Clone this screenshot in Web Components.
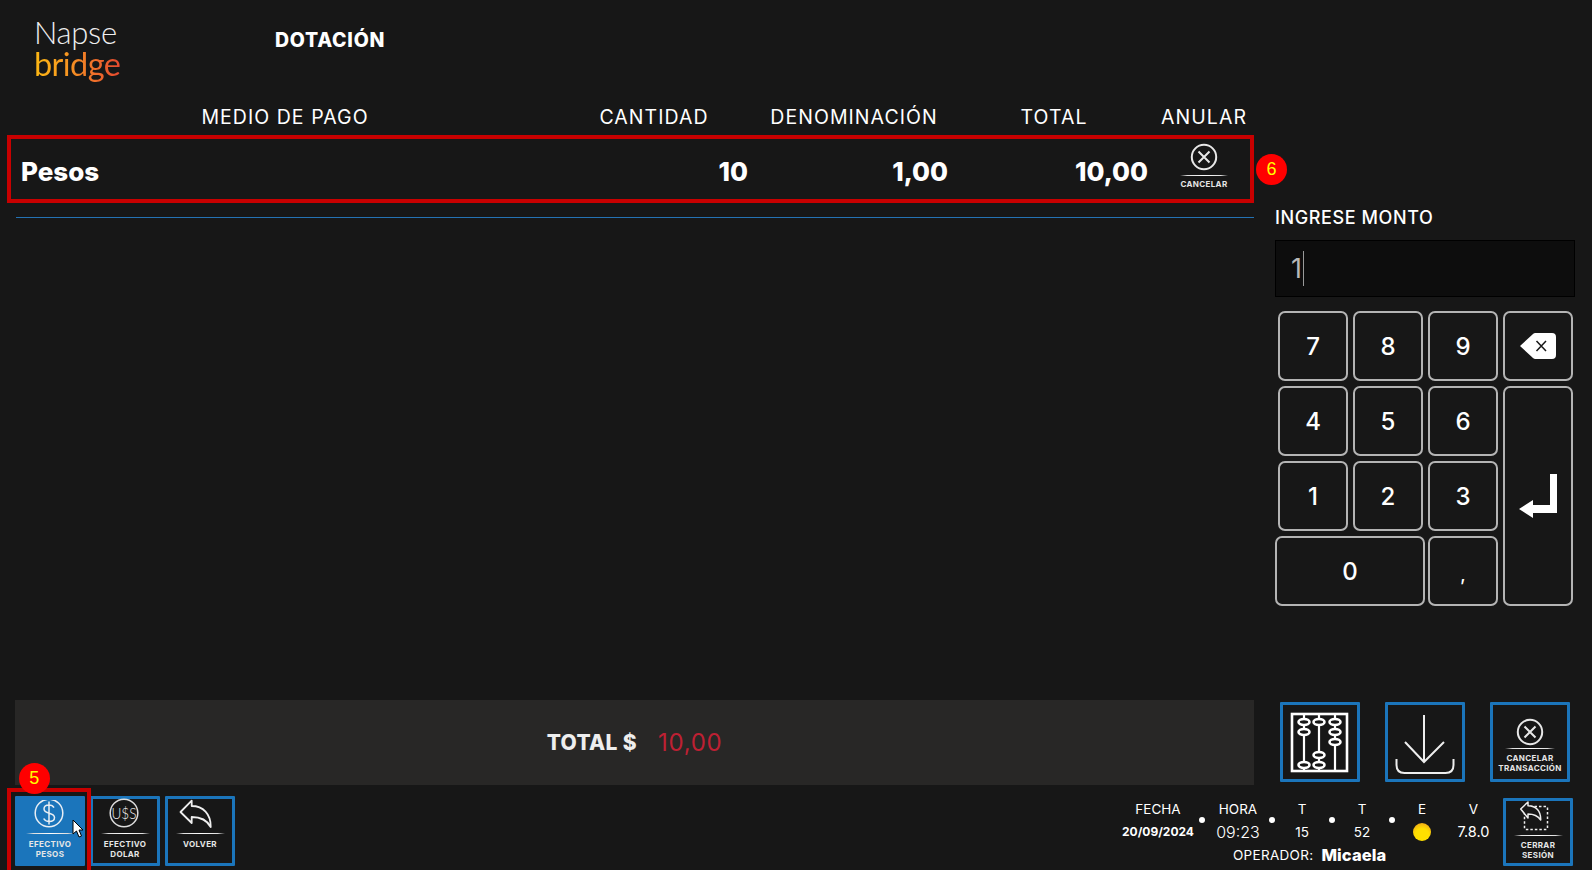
<!DOCTYPE html>
<html lang="es"><head><meta charset="utf-8"><title>Dotación</title>
<style>
html,body{margin:0;height:100%;background:#171717;overflow:hidden}
body{font-family:Inter,"Liberation Sans",sans-serif;color:#fff}
</style></head><body>
<pos-app>
  <pos-header slot="header">DOTACIÓN</pos-header>
  <pay-table slot="left">
    <pay-row>
      <span slot="name">Pesos</span><span slot="qty">10</span><span slot="den">1,00</span><span slot="tot">10,00</span>
      <action-btn slot="act" variant="plain" style="--icon-h:37px;--w:64px;--h:68px;--line:48px">
        <svg slot="icon" width="28" height="28" viewBox="0 0 28 28" fill="none" stroke="#e8e8e8" stroke-width="2" style="margin-top:5px"><circle cx="14" cy="14" r="12.2"/><path d="M8.5 8.5l11 11M19.5 8.5l-11 11"/></svg>
        CANCELAR
      </action-btn>
      <annot-badge slot="badge" style="--bx:1271.5px;--by:169px">6</annot-badge>
    </pay-row>
  </pay-table>
  <total-bar slot="left"><span slot="label">TOTAL $</span><span slot="value">10,00</span></total-bar>
  <side-panel slot="right">
    <amount-input>1</amount-input>
    <num-pad></num-pad>
    <side-actions>
      <action-btn variant="tall" style="--icon-h:74px">
        <svg slot="icon" width="60" height="62" viewBox="0 0 60 62" fill="none" stroke="#fff" stroke-width="2.6" style="margin-top:7px"><rect x="2" y="2" width="55" height="57"/><path d="M14 2v57M29 2v57M45 2v57" stroke-width="2.2"/><g fill="#171717"><ellipse cx="14" cy="10" rx="5.5" ry="3"/><ellipse cx="14" cy="20" rx="5.5" ry="3"/><ellipse cx="14" cy="53" rx="5.5" ry="3"/><ellipse cx="29" cy="10" rx="5.5" ry="3"/><ellipse cx="29" cy="43" rx="5.5" ry="3"/><ellipse cx="29" cy="53" rx="5.5" ry="3"/><ellipse cx="45" cy="10" rx="5.5" ry="3"/><ellipse cx="45" cy="20" rx="5.5" ry="3"/><ellipse cx="45" cy="30" rx="5.5" ry="3"/></g></svg>
      </action-btn>
      <action-btn variant="tall" style="--icon-h:74px">
        <svg slot="icon" width="60" height="62" viewBox="0 0 60 62" fill="none" stroke="#eee" stroke-width="2" style="margin-top:7px"><path d="M29 3v47M10 30l19 20 20-20"/><path d="M1.5 47v6q0 8 8 8h41q8 0 8-8v-6" stroke-width="2"/></svg>
      </action-btn>
      <action-btn variant="tall" style="--icon-h:43px;--line:50px;--pt:5px">
        <svg slot="icon" width="28" height="28" viewBox="0 0 28 28" fill="none" stroke="#e8e8e8" stroke-width="2" style="margin-top:13px"><circle cx="14" cy="14" r="12.2"/><path d="M8.5 8.5l11 11M19.5 8.5l-11 11"/></svg>
        CANCELAR<br>TRANSACCIÓN
      </action-btn>
    </side-actions>
  </side-panel>
  <pos-footer slot="footer">
    <action-btn slot="btns" active style="--icon-h:34px;--h:70px;--pt:6px">
      <svg slot="icon" width="34" height="34" viewBox="0 0 34 34" fill="none" stroke="#e8eef4" stroke-width="1.5" style="margin:1px 0 0 -3px"><circle cx="17" cy="13" r="13.8"/><path d="M22 7.6c-1-1.8-2.8-2.6-5-2.6-3 0-5 1.5-5 4 0 5.5 10.5 3 10.5 8.5 0 2.500-2.300 4-5.300 4-2.500 0-4.500-1-5.500-3M17 1.500v23"/></svg>
      EFECTIVO<br>PESOS
      <annot-badge slot="badge" style="--bx:34.3px;--by:778px">5</annot-badge>
      <annot-box slot="over"></annot-box>
      <svg slot="over" width="12" height="19" viewBox="0 0 12 19" style="position:absolute;left:54px;top:20px;z-index:3"><path d="M1 1v14l3.500-3 2.500 6 2.500-1-2.500-6H11z" fill="#fff" stroke="#000" stroke-width="1"/></svg>
    </action-btn>
    <action-btn slot="btns" style="--icon-h:34px;--h:70px;--pt:6px">
      <svg slot="icon" width="34" height="34" viewBox="0 0 34 34" fill="none" stroke="#ddd" stroke-width="1.5" overflow="visible" style="margin:1px 0 0 -3px"><circle cx="17" cy="13" r="13.8"/><text x="17" y="19" text-anchor="middle" font-family="Lato,sans-serif" font-weight="300" font-size="16" textLength="25" lengthAdjust="spacingAndGlyphs" fill="#eee" stroke="none">U$S</text></svg>
      EFECTIVO<br>DOLAR
    </action-btn>
    <action-btn slot="btns" style="--icon-h:34px;--h:70px;--pt:6px">
      <svg slot="icon" width="40" height="33" viewBox="4 2 40 33" fill="none" stroke="#eee" stroke-width="1.8" overflow="visible"><path d="M4.500 15 15.700 3.700V9C27 9 35 17 34.700 30 31 23 25 20 15.700 20v6z" stroke-linejoin="round"/></svg>
      VOLVER
    </action-btn>
    <status-bar slot="status">
      <status-cell slot="fecha"><span slot="k">FECHA</span><b slot="v" style="font-size:12px">20/09/2024</b></status-cell>
      <status-cell slot="hora"><span slot="k">HORA</span><span slot="v" style="font-size:16px;font-weight:300">09:23</span></status-cell>
      <status-cell slot="t1"><span slot="k">T</span><span slot="v">15</span></status-cell>
      <status-cell slot="t2"><span slot="k">T</span><span slot="v">52</span></status-cell>
      <status-cell slot="e"><span slot="k">E</span><span slot="v" style="display:block;width:18px;height:18px;border-radius:50%;background:radial-gradient(circle at 50% 70%,#ffdf00 0 45%,#f0a818 85%,#b98a2a 100%)"></span></status-cell>
      <status-cell slot="ver"><span slot="k">V</span><span slot="v" style="font-size:14.5px">7.8.0</span></status-cell>
      <span slot="oplabel">OPERADOR:</span><b slot="opname">Micaela</b>
    </status-bar>
    <action-btn slot="end" style="--icon-h:34px;--h:68px;--pt:5px;margin-top:2px">
      <svg slot="icon" width="40" height="34" viewBox="0 0 40 34" fill="none" stroke="#eee" stroke-width="1.5"><rect x="6.500" y="5.500" width="23" height="23" stroke-dasharray="2.500 2" rx="1"/><path d="M2.700 8 10 1v3.700C18 4.700 23 10 22.700 19 20 15 16 13 10 13v4z" fill="#171717" stroke-linejoin="round"/></svg>
      CERRAR<br>SESIÓN
    </action-btn>
  </pos-footer>
</pos-app>
<script>
function def(name,html,extra){
  const tpl=document.createElement('template');tpl.innerHTML=html;
  customElements.define(name,class extends HTMLElement{
    constructor(){super();this.attachShadow({mode:'open'}).appendChild(tpl.content.cloneNode(true));}
    connectedCallback(){if(extra)extra(this);}
  });
}
def('pos-app',`<style>
:host{display:grid;width:1592px;height:870px;grid-template-rows:106px 679px 85px;position:relative;overflow:hidden}
.main{display:flex;gap:21px;padding-left:15px;min-height:0}
.left{width:1239px;display:flex;flex-direction:column;justify-content:space-between}
.right{width:300px}
</style><slot name="header"></slot><div class="main"><div class="left"><slot name="left"></slot></div><div class="right"><slot name="right"></slot></div></div><slot name="footer"></slot>`);
def('pos-header',`<style>
:host{display:flex;align-items:flex-start}
.logo{margin:17px 0 0 34px;width:241px;font-family:Lato,sans-serif;font-weight:300}
.n{font-size:31px;line-height:31px;color:#eee;letter-spacing:-.3px}
.b{font-size:32.5px;font-weight:400;line-height:32px;letter-spacing:-.6px;background:linear-gradient(90deg,#fdb813,#f89a20 35%,#f0702a 70%,#e5492f);-webkit-background-clip:text;background-clip:text;color:transparent;width:max-content;padding-bottom:6px}
.t{font-weight:800;font-size:19.5px;margin-top:29px;line-height:22px;letter-spacing:.75px}
</style><div class="logo"><div class="n">Napse</div><div class="b">bridge</div></div><div class="t"><slot></slot></div>`);
def('pay-table',`<style>
:host{display:block}
.h{display:grid;grid-template-columns:538px 200px 200px 200px 100px;margin-left:1px;height:29px;align-items:start;font-size:19.5px;line-height:22px;text-align:center;letter-spacing:1.05px}
.line{height:1px;background:#2472b3;margin:14px 0 0 1px}
</style><div class="h"><div>MEDIO DE PAGO</div><div>CANTIDAD</div><div>DENOMINACIÓN</div><div>TOTAL</div><div>ANULAR</div></div><slot></slot><div class="line"></div>`);
def('pay-row',`<style>
:host{display:grid;grid-template-columns:538px 200px 200px 200px 100px;margin-left:1px;height:68px;align-items:center;position:relative;font-weight:800;font-size:26px}
.box{position:absolute;inset:0 0 0 -9px;border:4px solid #c80000;pointer-events:none}
.name{padding:5px 0 0 5px}.r{text-align:right;padding:5px 6px 0 0}.a{display:flex;justify-content:center}
</style><div class="name"><slot name="name"></slot></div><div class="r"><slot name="qty"></slot></div><div class="r"><slot name="den"></slot></div><div class="r"><slot name="tot"></slot></div><div class="a"><slot name="act"></slot></div><div class="box"></div><slot name="badge"></slot>`);
def('annot-badge',`<style>
:host{position:fixed;left:calc(var(--bx) - 15.5px);top:calc(var(--by) - 15.5px);width:31px;height:31px;border-radius:50%;background:#f00;color:#ff0;font:18px/31px "Liberation Sans",sans-serif;text-align:center;z-index:5}
</style><slot></slot>`);
def('annot-box',`<style>
:host{position:absolute;left:-11px;top:-11px;width:84px;height:95px;box-sizing:border-box;border:4px solid #c80000;z-index:2}
</style>`);
def('total-bar',`<style>
:host{display:flex;height:85px;background:#282726;align-items:center;justify-content:center;gap:21px}
.l{font-weight:800;font-size:21px;color:#eee;letter-spacing:.35px}
.v{font-weight:400;font-size:24px;color:#be2033;letter-spacing:.7px}
</style><span class="l"><slot name="label"></slot></span><span class="v"><slot name="value"></slot></span>`);
def('side-panel',`<style>
:host{display:flex;flex-direction:column;height:676px}
.lab{margin-top:101px;font-size:18px;line-height:22px;font-weight:500;letter-spacing:.6px}
</style><div class="lab">INGRESE MONTO</div><slot></slot>`);
def('amount-input',`<style>
:host{display:flex;align-items:center;box-sizing:border-box;height:57px;margin-top:11px;background:#0d0d0d;border:1px solid #000;padding-left:15px;color:#b8b8b8;font-size:27px;font-weight:400}
i{display:block;width:1px;height:35px;background:#999;margin-left:1px}
</style><slot></slot><i></i>`);
def('key-btn',`<style>
:host{display:flex;align-items:center;justify-content:center;box-sizing:border-box;border:2px solid #b4b4b4;border-radius:7px;font-size:24px;font-weight:500;color:#fff}
</style><slot></slot>`);
def('num-pad',`<style>
:host{display:grid;margin:14px 0 0 3px;grid-template-columns:repeat(4,70px);grid-template-rows:repeat(4,70px);gap:5px}
.z{grid-column:1/3;margin:0 -2px 0 -3px}.e{grid-column:4;grid-row:2/5}
</style>
<key-btn>7</key-btn><key-btn>8</key-btn><key-btn>9</key-btn>
<key-btn><svg width="36" height="26" viewBox="0 0 36 26"><path d="M16 0h16a4 4 0 0 1 4 4v18a4 4 0 0 1-4 4H16a4 4 0 0 1-3-1L0 13 13 1a4 4 0 0 1 3-1z" fill="#fff"/><path d="M16.500 8l9.500 10M26 8l-9.500 10" stroke="#171717" stroke-width="1.500" fill="none"/></svg></key-btn>
<key-btn>4</key-btn><key-btn>5</key-btn><key-btn>6</key-btn>
<key-btn class="e"><svg width="38" height="44" viewBox="0 0 38 44"><path d="M31 0h7v39H14v5L0 35l14-9v5h17z" fill="#fff"/></svg></key-btn>
<key-btn>1</key-btn><key-btn>2</key-btn><key-btn>3</key-btn>
<key-btn class="z">0</key-btn><key-btn style="font-size:18px;padding-top:7px">,</key-btn>`);
def('side-actions',`<style>
:host{display:flex;margin-top:auto;padding:0 5px;justify-content:space-between;width:290px}
</style><slot></slot>`);
def('action-btn',`<style>
:host{display:block;position:relative;box-sizing:border-box;width:var(--w,70px);height:var(--h,69px);border:3px solid #1b75bb;border-radius:1px;flex:none;color:#e6e6e6}
:host([variant=plain]){border-color:transparent}
:host([variant=tall]){width:80px;height:80px}
:host([active]){background:#1b75bb}
.i{height:var(--icon-h,33px);display:flex;justify-content:center;align-items:flex-start}
.ln{height:1px;width:var(--line,49px);margin:0 auto;background:linear-gradient(90deg,transparent,#ddd 15%,#fff 50%,#ddd 85%,transparent)}
.ln.off{display:none}
.t{padding-top:var(--pt,4px);text-align:center;font-size:8px;line-height:9.5px;font-weight:700;letter-spacing:.35px;white-space:nowrap}
</style><div class="i"><slot name="icon"></slot></div><div class="ln"></div><div class="t"><slot></slot></div><slot name="badge"></slot><slot name="over"></slot>`,
el=>{ if(!el.textContent.trim()) el.shadowRoot.querySelector('.ln').classList.add('off'); });
def('pos-footer',`<style>
:host{display:flex;box-sizing:border-box;padding:11px 19px 0 15px;align-items:flex-start}
.b{display:flex;gap:5px}.s{margin:1px 2px 0 auto}
</style><div class="b"><slot name="btns"></slot></div><div class="s"><slot name="status"></slot></div><slot name="end"></slot>`);
def('status-cell',`<style>
:host{display:grid;grid-template-rows:23px 23px;justify-items:center;align-items:center;font-size:13.5px;text-align:center}
</style><slot name="k"></slot><slot name="v"></slot>`);
def('status-bar',`<style>
:host{display:block}
.g{display:grid;grid-template-columns:72px 16px 56px 12px 48px 12px 48px 12px 48px 55px;align-items:center}
i{display:block;width:6px;height:6px;border-radius:50%;background:#fff;justify-self:center}
.op{display:flex;align-items:center;height:23px;padding-left:111px;font-size:13.5px;gap:8px;letter-spacing:.3px}
.op ::slotted(b){font-size:16.5px;font-weight:800;letter-spacing:.1px}
</style><div class="g"><slot name="fecha"></slot><i></i><slot name="hora"></slot><i></i><slot name="t1"></slot><i></i><slot name="t2"></slot><i></i><slot name="e"></slot><slot name="ver"></slot></div><div class="op"><slot name="oplabel"></slot><slot name="opname"></slot></div>`);
</script>
</body></html>
